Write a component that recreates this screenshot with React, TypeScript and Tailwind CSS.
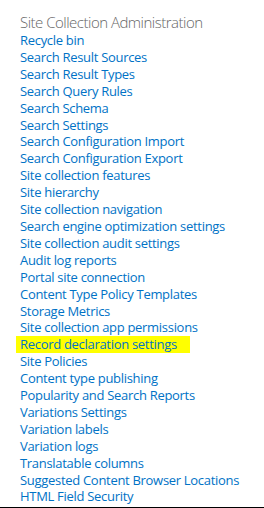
import React from "react";

const links = [
  "Recycle bin",
  "Search Result Sources",
  "Search Result Types",
  "Search Query Rules",
  "Search Schema",
  "Search Settings",
  "Search Configuration Import",
  "Search Configuration Export",
  "Site collection features",
  "Site hierarchy",
  "Site collection navigation",
  "Search engine optimization settings",
  "Site collection audit settings",
  "Audit log reports",
  "Portal site connection",
  "Content Type Policy Templates",
  "Storage Metrics",
  "Site collection app permissions",
  "Record declaration settings",
  "Site Policies",
  "Content type publishing",
  "Popularity and Search Reports",
  "Variations Settings",
  "Variation labels",
  "Variation logs",
  "Translatable columns",
  "Suggested Content Browser Locations",
  "HTML Field Security",
];

export default function App() {
  return (
    <div
      className="w-[264px] h-[508px] bg-white border-b border-black overflow-hidden pl-[20px] pt-[12px]"
      style={{ fontFamily: '"Open Sans", "Noto Sans", sans-serif' }}
    >
      <div className="text-[15px] leading-[20px] font-light tracking-[-0.5px] text-[#666]">
        Site Collection Administration
      </div>
      <ul className="flex flex-col">
        {links.map((l) => (
          <li
            key={l}
            className="leading-[16.9px] text-[13px] tracking-[-0.3px] text-[#0072c6] whitespace-nowrap"
          >
            {l === "Record declaration settings" ? (
              <span className="inline-block -ml-[4px] pl-[4px] pr-[13px] bg-[#ffff00]">
                {l}
              </span>
            ) : (
              <a>{l}</a>
            )}
          </li>
        ))}
      </ul>
    </div>
  );
}
